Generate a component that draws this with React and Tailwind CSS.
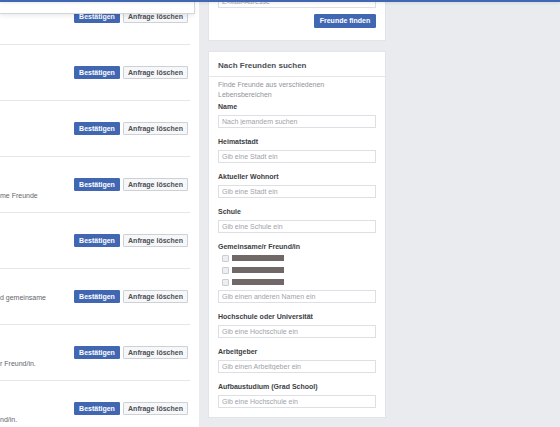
import { useState } from 'react'

const requests = [
  { note: '', noteClass: 'pt-[34px]' },
  { note: '', noteClass: 'pt-[34px]' },
  { note: '', noteClass: 'pt-[34px]' },
  { note: 'me Freunde', noteClass: 'pt-[34px]' },
  { note: '', noteClass: 'pt-[34px]' },
  { note: 'd gemeinsame', noteClass: 'pt-[24px]' },
  { note: 'r Freund/in.', noteClass: 'pt-[34px]' },
  { note: 'nd/in.', noteClass: 'pt-[34px]' },
]

const fields = [
  { label: 'Heimatstadt', placeholder: 'Gib eine Stadt ein' },
  { label: 'Aktueller Wohnort', placeholder: 'Gib eine Stadt ein' },
  { label: 'Schule', placeholder: 'Gib eine Schule ein' },
]

const moreFields = [
  { label: 'Hochschule oder Universität', placeholder: 'Gib eine Hochschule ein' },
  { label: 'Arbeitgeber', placeholder: 'Gib einen Arbeitgeber ein' },
  { label: 'Aufbaustudium (Grad School)', placeholder: 'Gib eine Hochschule ein' },
]

function TextInput({ placeholder, className = '' }) {
  return (
    <input
      type="text"
      placeholder={placeholder}
      className={`block w-full h-[13px] border border-[#dddfe2] bg-white px-[3px] text-[7px] leading-[11px] text-[#1d2129] placeholder:text-[#a0a3a9] outline-none ${className}`}
    />
  )
}

function Field({ label, placeholder }) {
  return (
    <div className="mt-[9px]">
      <p className="h-[10px] text-[7px] leading-[10px] font-bold text-[#3b3e44]">{label}</p>
      <TextInput placeholder={placeholder} className="mt-[3px]" />
    </div>
  )
}

function RequestRow({ note, noteClass }) {
  return (
    <div className="flex h-[56px] border-b border-[#e6e7ea] mr-[9px]">
      <div className={`flex-1 ${noteClass}`}>
        {note && <p className="text-[7px] leading-[10px] text-[#62666d] whitespace-nowrap">{note}</p>}
      </div>
      <div className="flex items-center gap-[3px] pr-[2px]">
        <button className="h-[13px] w-[46px] rounded-[1px] border border-[#4267b2] bg-[#4267b2] text-[7px] font-bold leading-[11px] text-white">
          Bestätigen
        </button>
        <button className="h-[13px] w-[65px] rounded-[1px] border border-[#ced0d4] bg-[#f6f7f9] text-[7px] font-bold leading-[11px] text-[#4b4f56]">
          Anfrage löschen
        </button>
      </div>
    </div>
  )
}

export default function App() {
  const [mutual, setMutual] = useState([false, false, false])

  return (
    <div
      className="relative h-[427px] w-[560px] overflow-hidden bg-[#e9ebee]"
      style={{ fontFamily: '"Liberation Sans", Arial, sans-serif' }}
    >
      {/* fixed header edge */}
      <div className="absolute inset-x-0 top-0 z-20 h-[2px] bg-[#4267b2] shadow-[0_1px_3px_rgba(0,0,0,0.12)]" />
      {/* open header dropdown */}
      <div className="absolute left-0 top-[2px] z-10 h-[12px] w-[195px] border-r border-b border-[#d3d6db] bg-white shadow-[0_2px_4px_rgba(0,0,0,0.08)]" />

      <div className="flex items-start">
        {/* friend requests */}
        <div className="-mt-[11px] w-[199px] bg-white pb-[40px]">
          {requests.map((r, i) => (
            <RequestRow key={i} note={r.note} noteClass={r.noteClass} />
          ))}
        </div>

        {/* right column */}
        <div className="-mt-[14px] ml-[10px] flex w-[176px] flex-col gap-[12px]">
          <div className="bg-white px-[9px] pt-[8px] pb-[12px] ring-1 ring-[#e2e4e8]">
            <TextInput placeholder="E-Mail-Adresse" className="h-[14px]" />
            <div className="mt-[6px] flex justify-end">
              <button className="h-[14px] w-[62px] rounded-[1px] border border-[#4267b2] bg-[#4267b2] text-[7px] font-bold leading-[12px] text-white">
                Freunde finden
              </button>
            </div>
          </div>

          <div className="bg-white ring-1 ring-[#e2e4e8]">
            <div className="flex h-[25px] items-center border-b border-[#e5e5e5] px-[9px] pt-[3px]">
              <h2 className="text-[8px] font-bold text-[#4b4f56]">Nach Freunden suchen</h2>
            </div>
            <div className="px-[9px] pt-[3px] pb-[9px]">
              <p className="text-[7px] leading-[10px] text-[#90949c]">
                Finde Freunde aus verschiedenen
                <br />
                Lebensbereichen
              </p>
              <div className="mt-[2px]">
                <p className="h-[10px] text-[7px] leading-[10px] font-bold text-[#3b3e44]">Name</p>
                <TextInput placeholder="Nach jemandem suchen" className="mt-[3px]" />
              </div>

              {fields.map((f) => (
                <Field key={f.label} label={f.label} placeholder={f.placeholder} />
              ))}

              <div className="mt-[9px]">
                <p className="h-[10px] text-[7px] leading-[10px] font-bold text-[#3b3e44]">Gemeinsame/r Freund/in</p>
                {mutual.map((checked, i) => (
                  <label key={i} className="flex h-[12px] items-center pl-[4px]">
                    <span
                      onClick={() => setMutual(mutual.map((c, j) => (j === i ? !c : c)))}
                      className="h-[7px] w-[7px] rounded-[1px] border border-[#c9ccd1] bg-[#eceef1]"
                    />
                    <span className="ml-[3px] h-[6px] w-[52px] bg-[#6f6867]" />
                  </label>
                ))}
                <TextInput placeholder="Gib einen anderen Namen ein" className="mt-[2px]" />
              </div>

              {moreFields.map((f) => (
                <Field key={f.label} label={f.label} placeholder={f.placeholder} />
              ))}
            </div>
          </div>
        </div>
      </div>
    </div>
  )
}
